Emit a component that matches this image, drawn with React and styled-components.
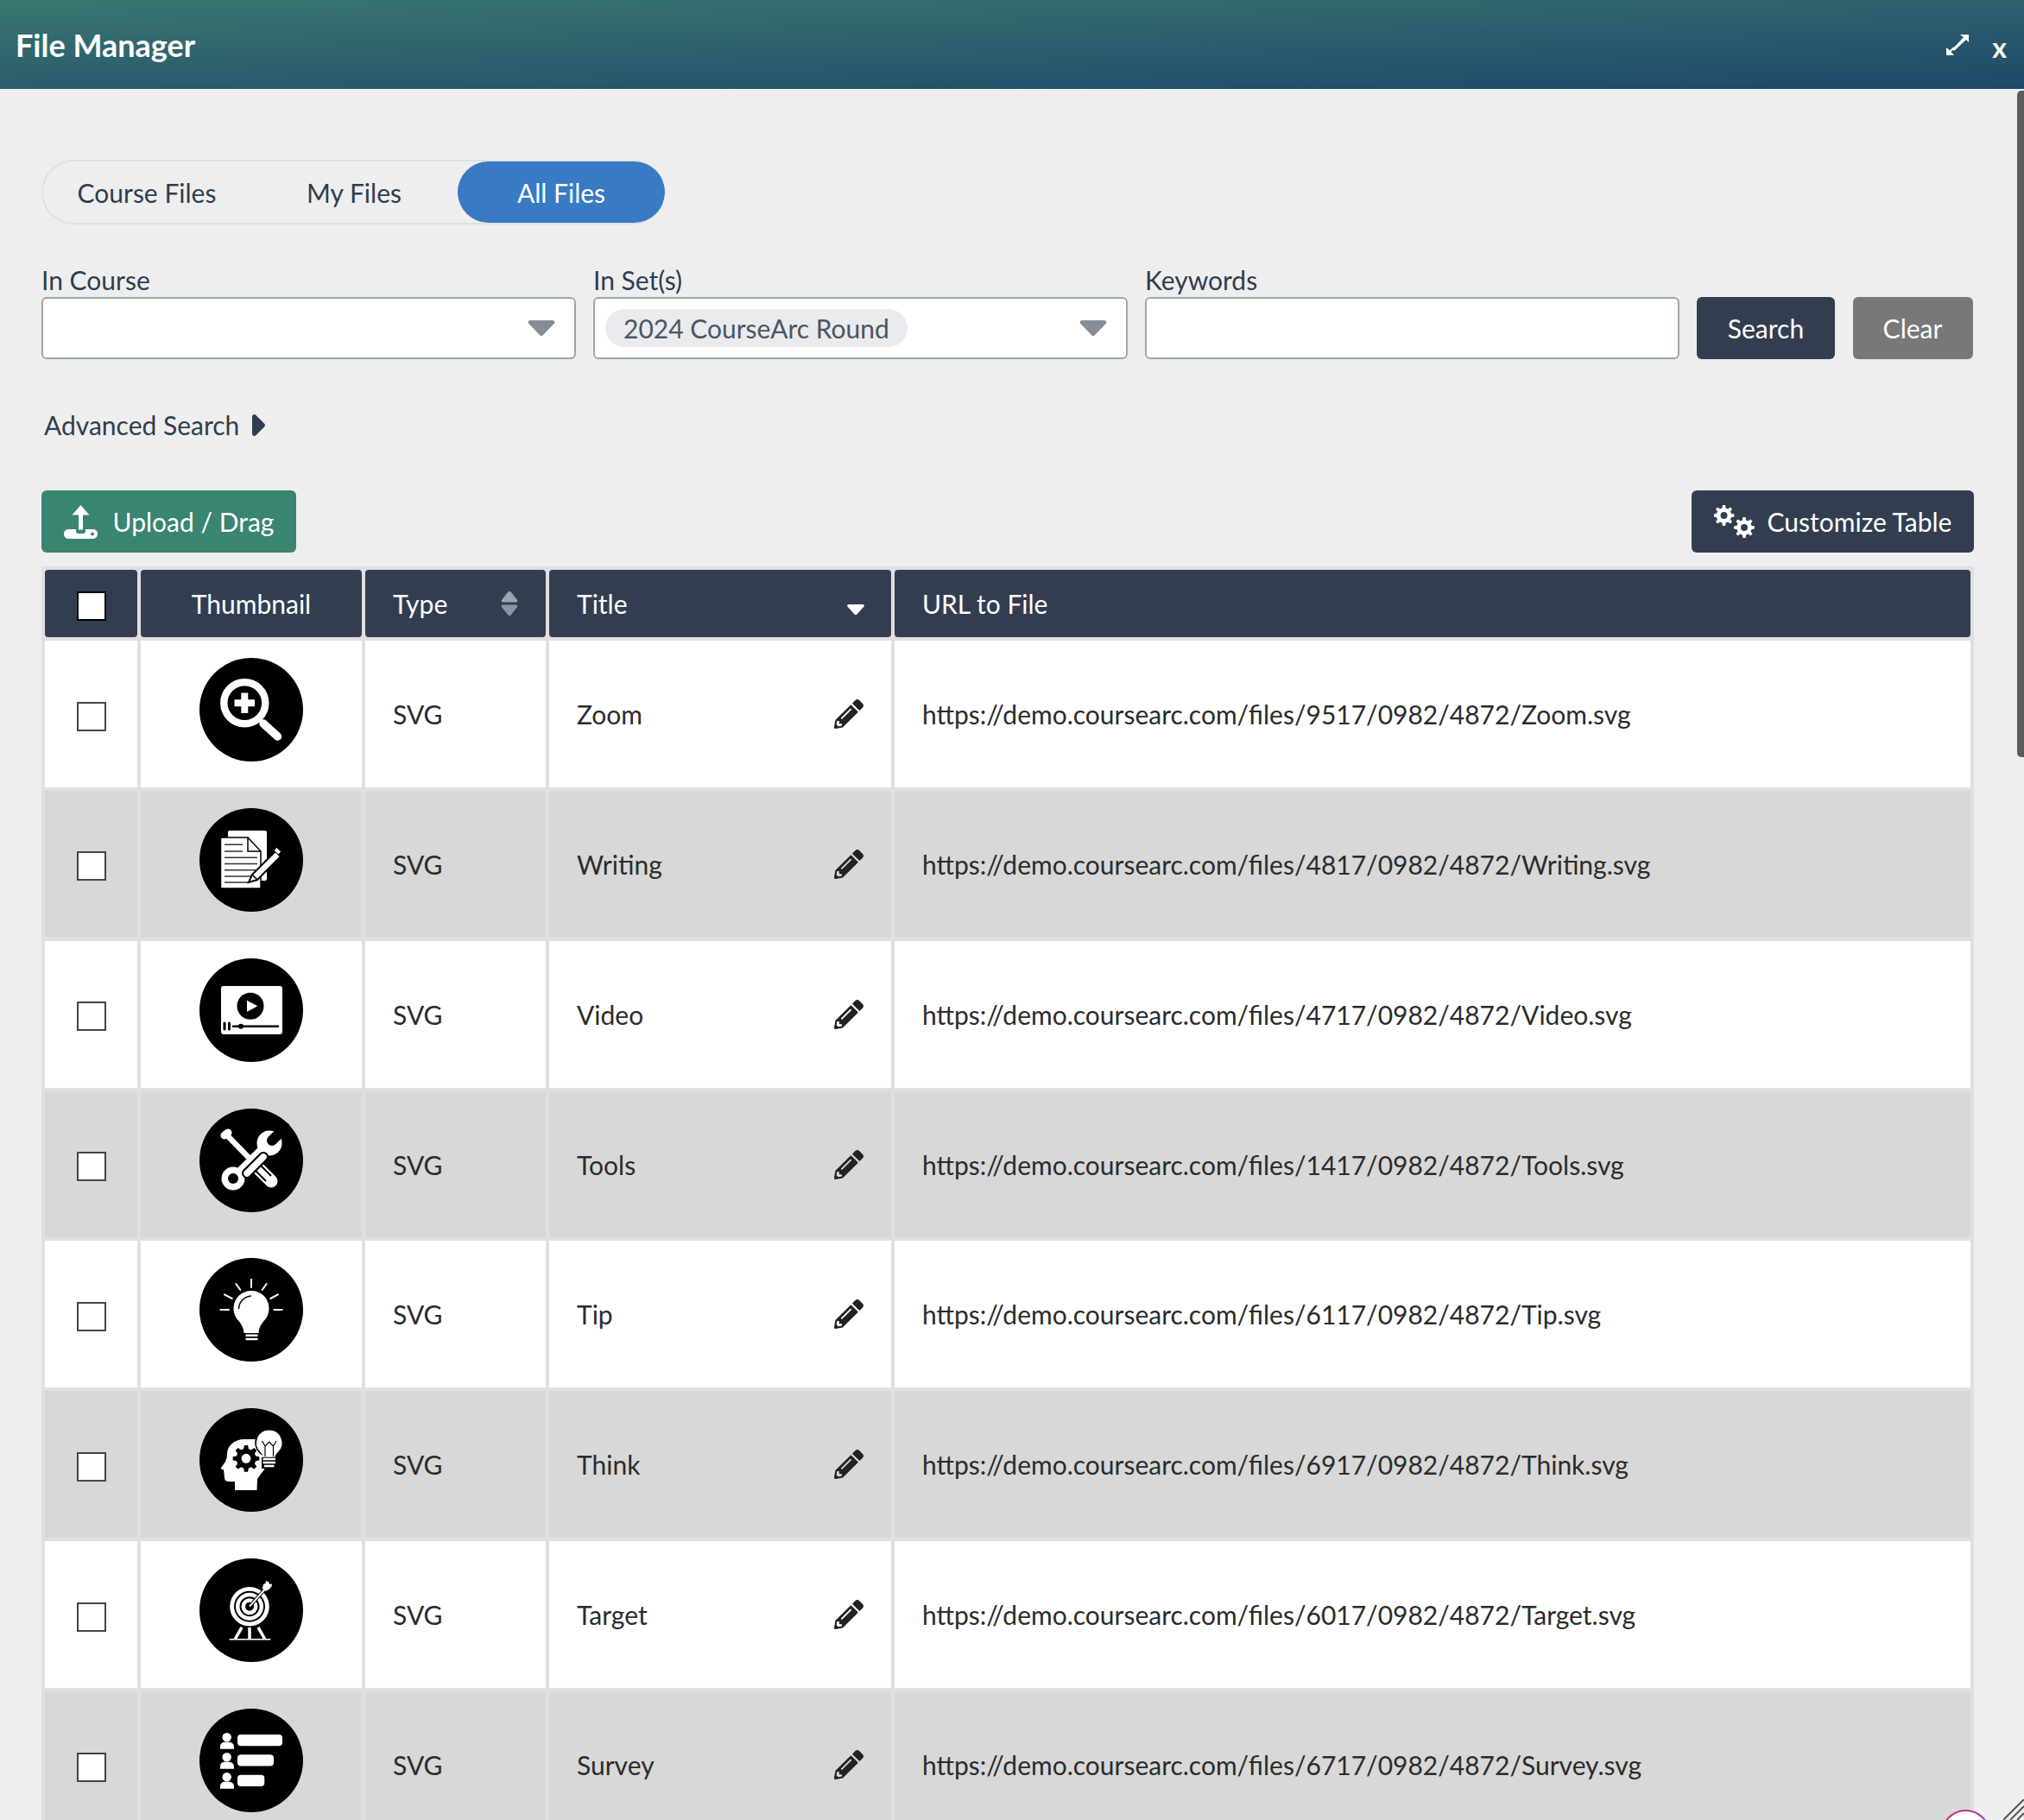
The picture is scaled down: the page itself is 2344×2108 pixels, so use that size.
import styled, { createGlobalStyle } from 'styled-components';
import { FaPencilAlt } from 'react-icons/fa';

const GlobalStyle = createGlobalStyle`
  html, body {
    margin: 0;
    padding: 0;
    background: #eeeeee;
  }
  body {
    font-family: "Lato", "Liberation Sans", sans-serif;
    color: #2f3d50;
  }
`;

const Window = styled.div`
  position: relative;
  width: 2344px;
  height: 2108px;
  overflow: hidden;
  background: #eeeeee;
`;

const TitleBar = styled.header`
  display: flex;
  align-items: center;
  justify-content: space-between;
  height: 103px;
  padding: 0 20px 0 18px;
  box-sizing: border-box;
  background: linear-gradient(178deg, #38776f 0%, #1f476b 100%);
  color: #ffffff;
`;

const TitleText = styled.h1`
  margin: 0;
  font-size: 36px;
  font-weight: 700;
`;

const TitleActions = styled.div`
  display: flex;
  align-items: center;
  gap: 27px;
`;

const CloseMark = styled.span`
  font-size: 32px;
  font-weight: 700;
  line-height: 32px;
  margin-top: 6px;
`;

const Body = styled.main`
  padding: 82px 58px 0 48px;
`;

const TabGroup = styled.div`
  display: flex;
  width: 722px;
  height: 75px;
  box-sizing: border-box;
  border: 2px solid #e0e0e0;
  border-radius: 38px;
`;

const Tab = styled.button`
  flex: 0 0 240px;
  border: none;
  border-radius: 38px;
  padding: 0;
  font: inherit;
  font-size: 30px;
  background: ${(p) => (p.$active ? '#387ac3' : 'transparent')};
  color: ${(p) => (p.$active ? '#ffffff' : '#2f3d50')};
`;

const SearchRow = styled.div`
  display: grid;
  grid-template-columns: repeat(3, 618.5px) 160px 139px;
  column-gap: 20.5px;
  align-items: end;
  margin-top: 44px;
`;

const Field = styled.div`
  display: flex;
  flex-direction: column;
`;

const FieldLabel = styled.label`
  height: 40px;
  font-size: 30px;
  line-height: 40px;
  color: #2f3d50;
`;

const InputBox = styled.div`
  display: flex;
  align-items: center;
  justify-content: space-between;
  height: 72px;
  box-sizing: border-box;
  padding: 0 22px 0 12px;
  background: #ffffff;
  border: 2px solid #9aa8a8;
  border-radius: 6px;
`;

const Chip = styled.span`
  padding: 0 21px;
  height: 44px;
  line-height: 44px;
  border-radius: 22px;
  background: #e9ebee;
  font-size: 30px;
  color: #4a5563;
`;

const Button = styled.button`
  display: flex;
  align-items: center;
  justify-content: center;
  height: 72px;
  border: none;
  border-radius: 6px;
  padding: 0;
  font: inherit;
  font-size: 30px;
  color: #ffffff;
  background: ${(p) => p.$bg || '#323e50'};
`;

const AdvancedRow = styled.div`
  display: flex;
  align-items: center;
  gap: 15px;
  height: 40px;
  margin-top: 56px;
  padding-left: 3px;
  font-size: 30px;
  color: #2f3d50;
`;

const Toolbar = styled.div`
  display: flex;
  justify-content: space-between;
  margin-top: 56px;
`;

const UploadButton = styled(Button)`
  width: 295px;
  gap: 18px;
`;

const CustomizeButton = styled(Button)`
  width: 327px;
  gap: 15px;
`;

const Table = styled.table`
  width: 2238px;
  margin-top: 16px;
  table-layout: fixed;
  border-collapse: separate;
  border-spacing: 4px;
  background: #e0e0e0;
  font-size: 30px;
`;

const HeadCell = styled.th`
  height: 78px;
  padding: 0 32px;
  box-sizing: border-box;
  background: #323e50;
  border-radius: 4px;
  color: #ffffff;
  font-weight: 400;
  text-align: ${(p) => (p.$center ? 'center' : 'left')};
`;

const HeadInner = styled.div`
  display: flex;
  align-items: center;
  justify-content: space-between;
`;

const Row = styled.tr`
  background: ${(p) => (p.$shade ? '#d8d8d8' : '#ffffff')};
`;

const Cell = styled.td`
  height: 169.86px;
  padding: 0 32px;
  box-sizing: border-box;
  color: #2b2b2b;
`;

const CheckCell = styled(Cell)`
  padding: 0;
  text-align: center;
`;

const ThumbCell = styled(Cell)`
  padding: 20px 0 0;
  text-align: center;
  vertical-align: top;
`;

const TitleInner = styled.div`
  display: flex;
  align-items: center;
  justify-content: space-between;
`;

const CheckBox = styled.span`
  display: inline-block;
  width: 34px;
  height: 34px;
  box-sizing: border-box;
  vertical-align: middle;
  background: #ffffff;
  border: 2px solid ${(p) => (p.$head ? '#000000' : '#444444')};
`;

const Pencil = styled(FaPencilAlt)`
  width: 34px;
  height: 34px;
  color: #222222;
`;

const Thumb = styled.svg`
  display: inline-block;
  width: 120px;
  height: 120px;
`;

const ScrollThumb = styled.div`
  position: absolute;
  top: 105px;
  right: 0;
  width: 8px;
  height: 772px;
  border-radius: 5px 0 0 5px;
  background: #5c5c5c;
`;

const HelpBubble = styled.div`
  position: absolute;
  left: 2248px;
  top: 2096px;
  width: 57px;
  height: 57px;
  box-sizing: border-box;
  border-radius: 50%;
  border: 2px solid transparent;
  background: linear-gradient(#ffffff, #ffffff) padding-box,
    linear-gradient(90deg, #e02a4f, #8e3fc0) border-box;
`;

const ResizeGrip = styled.svg`
  position: absolute;
  right: 0;
  bottom: 0;
  width: 24px;
  height: 24px;
`;

// builds a cog outline, with a round hole cut out when used with evenodd
const gearPath = (cx, cy, r1, r2, hole, teeth = 8) => {
  const pts = [];
  const step = (Math.PI * 2) / teeth;
  for (let i = 0; i < teeth; i++) {
    const a = i * step - Math.PI / 2;
    const pairs = [
      [r2, a - step * 0.32],
      [r1, a - step * 0.17],
      [r1, a + step * 0.17],
      [r2, a + step * 0.32],
    ];
    pairs.forEach(([r, t]) => {
      pts.push(`${(cx + r * Math.cos(t)).toFixed(2)} ${(cy + r * Math.sin(t)).toFixed(2)}`);
    });
  }
  const ring = hole
    ? ` M${cx - hole} ${cy} a${hole} ${hole} 0 1 0 ${hole * 2} 0 a${hole} ${hole} 0 1 0 ${-hole * 2} 0 Z`
    : '';
  return `M${pts.join(' L')} Z${ring}`;
};

const ZoomArt = () => (
  <g>
    <circle cx="52.3" cy="52.3" r="24" fill="none" stroke="#fff" strokeWidth="8.4" />
    <path d="M52.3 40.5v23.6M40.5 52.3h23.6" stroke="#fff" strokeWidth="8" />
    <path d="M74 76l16.5 15" stroke="#fff" strokeWidth="9.5" strokeLinecap="round" />
  </g>
);

const WritingArt = () => (
  <g>
    <rect x="33" y="26" width="45" height="58" rx="2" fill="#fff" />
    <path d="M26 34h30l15 16v43H26a1.5 1.5 0 0 1-1.500-1.500V35.500A1.500 1.500 0 0 1 26 34z" fill="#fff" stroke="#000" strokeWidth="1.500" />
    <path d="M56 34v16h15" fill="none" stroke="#000" strokeWidth="1.500" />
    <path d="M29 42.300h21M29 50h21M29 57.300h38M29 64.500h38M29 71.700h38M29 79h36M29 86h28" stroke="#333" strokeWidth="1.600" />
    <path d="M57 86l4-9 27-27 6 6-27 27z" fill="#fff" stroke="#000" strokeWidth="2" />
    <path d="M86 49l3.500-3.500 5 5-3 3.500z" fill="#fff" stroke="#000" strokeWidth="1" />
    <path d="M61 77l6 6" stroke="#000" strokeWidth="1.500" />
  </g>
);

const VideoArt = () => (
  <g>
    <rect x="25" y="32" width="71" height="56" rx="3" fill="#fff" />
    <circle cx="59" cy="55.300" r="15.500" fill="#000" />
    <path d="M55 48.700V62l12.300-6.700z" fill="#fff" />
    <path d="M29 75v7M34.500 75v7" stroke="#000" strokeWidth="3" strokeLinecap="round" />
    <path d="M39 78.700h52" stroke="#000" strokeWidth="2.500" strokeLinecap="round" />
    <circle cx="48" cy="78.700" r="3" fill="#000" />
  </g>
);

const ToolsArt = () => (
  <g>
    <path d="M39 81L76 44" stroke="#fff" strokeWidth="10" />
    <circle cx="39" cy="81" r="13.500" fill="#fff" />
    <circle cx="39" cy="81" r="6" fill="#000" />
    <circle cx="81" cy="40" r="14.500" fill="#fff" />
    <path d="M84 37L99 22" stroke="#000" strokeWidth="12" strokeLinecap="round" />
    <path d="M29 31l4-3" stroke="#fff" strokeWidth="9" strokeLinecap="round" />
    <path d="M31 30L70 70" stroke="#fff" strokeWidth="6.500" />
    <path d="M69 70L83 84" stroke="#fff" strokeWidth="15" strokeLinecap="round" />
    <path d="M70 65l13 13M64 71l13 13" stroke="#000" strokeWidth="2" />
    <path d="M55 75L74 56" stroke="#000" strokeWidth="12" strokeLinecap="round" />
    <path d="M55 75L74 56" stroke="#fff" strokeWidth="7.500" strokeLinecap="round" />
  </g>
);

const TipArt = () => (
  <g>
    <path d="M60 25v9M42.300 30l5 7M77.700 30l-5 7M29 42.300l8.700 4.700M91 42.300l-8.700 4.700M24.300 60H34M86.300 60h9.400" stroke="#fff" strokeWidth="2" strokeLinecap="round" />
    <path d="M60 38a20.500 20.500 0 0 1 15 34.500c-3.500 4-6 8-6.500 14.500h-17c-.5-6.500-3-10.500-6.500-14.500A20.500 20.500 0 0 1 60 38z" fill="#fff" />
    <path d="M45.500 59c0-8 6.500-14.500 14.500-15" fill="none" stroke="#000" strokeWidth="1.500" />
    <path d="M53.500 89.700h14M53.500 94h14" stroke="#fff" strokeWidth="2.500" />
  </g>
);

const ThinkArt = () => (
  <g>
    <path d="M52 36c-12 0-20 8-20 17 0 5-1 6-2 9l-5 7c-.5 2 2.500 2 3 2.500l1 9c0 3 2 4.500 5 4.500h7v10h25.500l.5-13 9-12.500V36z" fill="#fff" />
    <path fillRule="evenodd" d={gearPath(54, 58.300, 15.500, 11.500, 5.500)} fill="#000" />
    <circle cx="80.700" cy="40" r="16.500" fill="#000" />
    <path d="M80.700 25.500a14.700 14.700 0 0 1 10.500 25c-2.500 2.500-3.500 4-3.500 6v1h-14v-1c0-2-1-3.500-3.500-6a14.700 14.700 0 0 1 10.500-25z" fill="#fff" />
    <path d="M76 56V44l-3.500-6M85.500 56V44l3.500-6M76 44l4.700-5 4.800 5" fill="none" stroke="#000" strokeWidth="1.200" />
    <path d="M72 56.700h17.500V70H72z" fill="#000" />
    <path d="M73.500 59h14.500M73.500 63h14.500M75 67h11.500" stroke="#fff" strokeWidth="2.500" />
  </g>
);

const TargetArt = () => (
  <g>
    <path d="M49 80l-7.700 13.300M58 80v13.300M68 80l7.700 13.300" stroke="#fff" strokeWidth="3.500" />
    <path d="M34.700 93.700h47.600" stroke="#fff" strokeWidth="1.600" />
    <circle cx="58" cy="55.700" r="22.800" fill="#fff" />
    <circle cx="58" cy="55.700" r="18" fill="#000" />
    <circle cx="58" cy="55.700" r="16" fill="#fff" />
    <circle cx="58" cy="55.700" r="11.500" fill="#000" />
    <circle cx="58" cy="55.700" r="9.500" fill="#fff" />
    <circle cx="58" cy="55.700" r="5" fill="#000" />
    <path d="M58 55.700L76 35.500" stroke="#000" strokeWidth="4" />
    <path d="M58 55.700L76 35.500" stroke="#fff" strokeWidth="2" />
    <path d="M72.500 34.500l2-5 2-.5.500-3 3.500 1.500.5 2.500 3-.5-.5 3-3 3.500-4 2z" fill="#fff" />
  </g>
);

const SurveyArt = () => (
  <g fill="#fff">
    {[0, 23, 46].map((dy) => (
      <g key={dy}>
        <circle cx="31.700" cy={33.3 + dy} r="5.200" />
        <path d={`M24 ${46.7 + dy}v-3a5 5 0 0 1 5-5h5.500a5.500 5.500 0 0 1 5.500 5.500v2.500z`} />
      </g>
    ))}
    <rect x="44" y="30" width="52" height="13.300" rx="4" />
    <rect x="44" y="53.300" width="42" height="13.300" rx="4" />
    <rect x="44" y="76.700" width="31.300" height="13.300" rx="4" />
  </g>
);

const files = [
  { id: '9517', name: 'Zoom', Art: ZoomArt },
  { id: '4817', name: 'Writing', Art: WritingArt },
  { id: '4717', name: 'Video', Art: VideoArt },
  { id: '1417', name: 'Tools', Art: ToolsArt },
  { id: '6117', name: 'Tip', Art: TipArt },
  { id: '6917', name: 'Think', Art: ThinkArt },
  { id: '6017', name: 'Target', Art: TargetArt },
  { id: '6717', name: 'Survey', Art: SurveyArt },
];

const Caret = () => (
  <svg width="32" height="20" viewBox="0 0 32 20">
    <path d="M3 1h26c2 0 3 2 2 3.500L18 18c-1 1.500-3 1.500-4 0L1 4.500C0 3 1 1 3 1z" fill="#868c96" />
  </svg>
);

const ExpandIcon = () => (
  <svg width="26" height="24" viewBox="0 0 26 24" fill="#ffffff">
    <path d="M16 0h10v9l-3-3L9 19l-2-2L20 3z" />
    <path d="M0 24v-9l3 2.500 3 3 3 3.500z" />
    <path d="M3 21l6-6" stroke="#fff" strokeWidth="2" />
  </svg>
);

const UploadIcon = () => (
  <svg width="39" height="39" viewBox="0 0 39 39" fill="#ffffff">
    <path d="M19.500 0l10 11.500h-7.500v17h-5v-17H9.500z" />
    <path d="M5 28h9v2.500c0 1.500 1 2.500 2.500 2.500h6c1.500 0 2.500-1 2.500-2.500V28h9a5 5 0 0 1 5 5.500A5.500 5.500 0 0 1 33.500 39h-28A5.500 5.500 0 0 1 0 33.500 5 5 0 0 1 5 28z" />
    <circle cx="33" cy="33.500" r="2" fill="#3a8472" />
  </svg>
);

const CogsIcon = () => (
  <svg width="47" height="38" viewBox="0 0 47 38" fill="#ffffff">
    <path fillRule="evenodd" d={gearPath(11.5, 12, 12, 8.7, 4)} />
    <path fillRule="evenodd" d={gearPath(35, 26, 12, 8.7, 4)} />
  </svg>
);

const SortBoth = () => (
  <svg width="20" height="28" viewBox="0 0 20 28">
    <path d="M10 0c1 0 1.500.5 2 1l7 9c.8 1.200 0 2.500-1.500 2.500h-15C1 12.500.2 11.200 1 10l7-9c.5-.5 1-1 2-1z" fill="#9aa5ad" />
    <path d="M10 28c1 0 1.500-.5 2-1l7-9c.8-1.200 0-2.500-1.500-2.500h-15C1 15.500.2 16.800 1 18l7 9c.5.500 1 1 2 1z" fill="#8b96a0" />
  </svg>
);

const SortDown = () => (
  <svg width="20" height="12" viewBox="0 0 20 12" style={{ marginTop: 14, marginRight: -1 }}>
    <path d="M2 0h16c1.500 0 2.300 1.400 1.500 2.500l-8 9c-.8.800-2.200.800-3 0l-8-9C-.3 1.400.5 0 2 0z" fill="#ffffff" />
  </svg>
);

const App = () => (
  <Window>
    <GlobalStyle />
    <TitleBar>
      <TitleText>File Manager</TitleText>
      <TitleActions>
        <ExpandIcon />
        <CloseMark>x</CloseMark>
      </TitleActions>
    </TitleBar>
    <Body>
      <TabGroup>
        <Tab>Course Files</Tab>
        <Tab>My Files</Tab>
        <Tab $active>All Files</Tab>
      </TabGroup>
      <SearchRow>
        <Field>
          <FieldLabel>In Course</FieldLabel>
          <InputBox>
            <span />
            <Caret />
          </InputBox>
        </Field>
        <Field>
          <FieldLabel>In Set(s)</FieldLabel>
          <InputBox>
            <Chip>2024 CourseArc Round</Chip>
            <Caret />
          </InputBox>
        </Field>
        <Field>
          <FieldLabel>Keywords</FieldLabel>
          <InputBox />
        </Field>
        <Button>Search</Button>
        <Button $bg="#787878">Clear</Button>
      </SearchRow>
      <AdvancedRow>
        Advanced Search
        <svg width="15" height="25" viewBox="0 0 15 25">
          <path d="M2.500 0c1 0 1.500.5 2 1l9.500 9.500c1.200 1.200 1.200 2.800 0 4L4.500 24c-.5.500-1 1-2 1C1 25 0 24 0 22.500v-20C0 1 1 0 2.500 0z" fill="#2f3d50" />
        </svg>
      </AdvancedRow>
      <Toolbar>
        <UploadButton $bg="#3a8472">
          <UploadIcon />
          Upload / Drag
        </UploadButton>
        <CustomizeButton>
          <CogsIcon />
          Customize Table
        </CustomizeButton>
      </Toolbar>
      <Table>
        <colgroup>
          <col style={{ width: 107 }} />
          <col style={{ width: 256 }} />
          <col style={{ width: 209 }} />
          <col style={{ width: 396 }} />
          <col />
        </colgroup>
        <thead>
          <tr>
            <HeadCell $center style={{ padding: 0 }}>
              <CheckBox $head />
            </HeadCell>
            <HeadCell $center>Thumbnail</HeadCell>
            <HeadCell>
              <HeadInner>
                Type
                <SortBoth />
              </HeadInner>
            </HeadCell>
            <HeadCell>
              <HeadInner>
                Title
                <SortDown />
              </HeadInner>
            </HeadCell>
            <HeadCell>URL to File</HeadCell>
          </tr>
        </thead>
        <tbody>
          {files.map(({ id, name, Art }, i) => (
            <Row key={name} $shade={i % 2 === 1}>
              <CheckCell>
                <CheckBox />
              </CheckCell>
              <ThumbCell>
                <Thumb viewBox="0 0 120 120">
                  <circle cx="60" cy="60" r="60" fill="#000" />
                  <Art />
                </Thumb>
              </ThumbCell>
              <Cell>SVG</Cell>
              <Cell>
                <TitleInner>
                  {name}
                  <Pencil />
                </TitleInner>
              </Cell>
              <Cell>{`https://demo.coursearc.com/files/${id}/0982/4872/${name}.svg`}</Cell>
            </Row>
          ))}
        </tbody>
      </Table>
    </Body>
    <ScrollThumb />
    <HelpBubble />
    <ResizeGrip viewBox="0 0 24 24">
      <path d="M0 24L24 0M8 24L24 8M16 24l8-8" stroke="#555" strokeWidth="2" />
    </ResizeGrip>
  </Window>
);

export default App;
